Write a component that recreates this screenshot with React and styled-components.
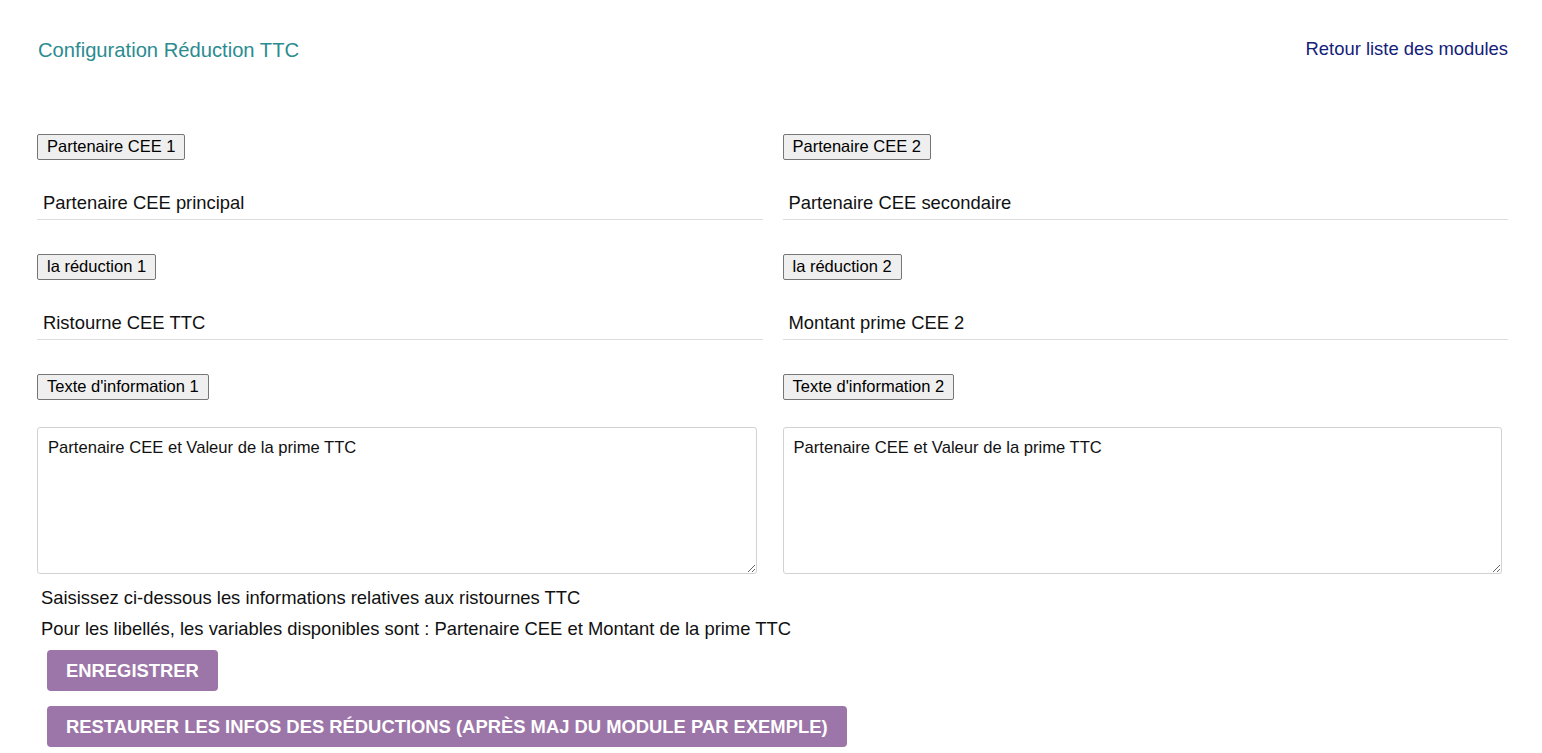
import React from "react";
import styled, { createGlobalStyle } from "styled-components";

const GlobalStyle = createGlobalStyle`
  html, body { margin: 0; padding: 0; background: #fff; }
  body { font-family: "Liberation Sans", Arial, sans-serif; color: #111; }
`;

const Page = styled.div`
  padding: 38px 34px 0 37px;
`;

const Header = styled.div`
  display: flex;
  justify-content: space-between;
  align-items: flex-start;
  height: 96px;
`;

const Title = styled.h1`
  margin: 1px 0 0 1px;
  font-size: 20.2px;
  font-weight: 400;
  color: #2b8b91;
  line-height: 22px;
`;

const BackLink = styled.a`
  font-size: 18.4px;
  color: #14207a;
  text-decoration: none;
  line-height: 22px;
  cursor: pointer;
`;

const Columns = styled.div`
  display: grid;
  grid-template-columns: 1fr 1fr;
  column-gap: 20px;
`;

const Column = styled.div`
  display: flex;
  flex-direction: column;
  align-items: flex-start;
`;

const FieldLabel = styled.button`
  box-sizing: border-box;
  height: 26px;
  font-family: "Liberation Sans", Arial, sans-serif;
  font-size: 16.5px;
  line-height: 18px;
  color: #000;
  background: #efefef;
  border: 1px solid #767676;
  border-radius: 2px;
  padding: 1px 9px 4px 9px;
  margin-bottom: ${(p) => p.$gap || 32}px;
`;

const TextInput = styled.input`
  box-sizing: border-box;
  width: 100%;
  height: 28px;
  font-family: "Liberation Sans", Arial, sans-serif;
  font-size: 18.4px;
  color: #111;
  border: none;
  border-bottom: 1px solid #dcdcdc;
  padding: 0 6px 5px;
  margin-bottom: 34px;
  outline: none;
  background: transparent;
`;

const TextArea = styled.textarea`
  box-sizing: border-box;
  width: calc(100% - 6px);
  height: 147px;
  font-family: "Liberation Sans", Arial, sans-serif;
  font-size: 16.6px;
  line-height: 20px;
  color: #111;
  border: 1px solid #d2d2d2;
  border-radius: 3px;
  padding: 10px 10px 8px;
  resize: both;
  outline: none;
`;

const Help = styled.div`
  padding: 13px 0 0 4px;
`;

const HelpLine = styled.p`
  margin: 0 0 10px;
  font-size: 18.4px;
  line-height: 21px;
  color: #111;
`;

const Actions = styled.div`
  display: flex;
  flex-direction: column;
  align-items: flex-start;
  gap: 15px;
  padding: 1px 0 0 10px;
`;

const ActionButton = styled.button`
  font-family: "Liberation Sans", Arial, sans-serif;
  font-size: 18.4px;
  font-weight: 700;
  text-transform: uppercase;
  color: #fff;
  background: #9c76a8;
  border: none;
  border-radius: 4px;
  height: 41px;
  padding: 0 19px 0 19px;
  cursor: pointer;
`;

const columns = [
  {
    n: 1,
    partner: "Partenaire CEE principal",
    reduction: "Ristourne CEE TTC",
    info: "Partenaire CEE et Valeur de la prime TTC",
  },
  {
    n: 2,
    partner: "Partenaire CEE secondaire",
    reduction: "Montant prime CEE 2",
    info: "Partenaire CEE et Valeur de la prime TTC",
  },
];

export default function App() {
  return (
    <>
      <GlobalStyle />
      <Page>
        <Header>
          <Title>Configuration Réduction TTC</Title>
          <BackLink>Retour liste des modules</BackLink>
        </Header>
        <Columns>
          {columns.map((c) => (
            <Column key={c.n}>
              <FieldLabel>Partenaire CEE {c.n}</FieldLabel>
              <TextInput defaultValue={c.partner} />
              <FieldLabel>la réduction {c.n}</FieldLabel>
              <TextInput defaultValue={c.reduction} />
              <FieldLabel $gap={27}>Texte d'information {c.n}</FieldLabel>
              <TextArea defaultValue={c.info} />
            </Column>
          ))}
        </Columns>
        <Help>
          <HelpLine>Saisissez ci-dessous les informations relatives aux ristournes TTC</HelpLine>
          <HelpLine>Pour les libellés, les variables disponibles sont : Partenaire CEE et Montant de la prime TTC</HelpLine>
        </Help>
        <Actions>
          <ActionButton>Enregistrer</ActionButton>
          <ActionButton>Restaurer les infos des réductions (après maj du module par exemple)</ActionButton>
        </Actions>
      </Page>
    </>
  );
}
